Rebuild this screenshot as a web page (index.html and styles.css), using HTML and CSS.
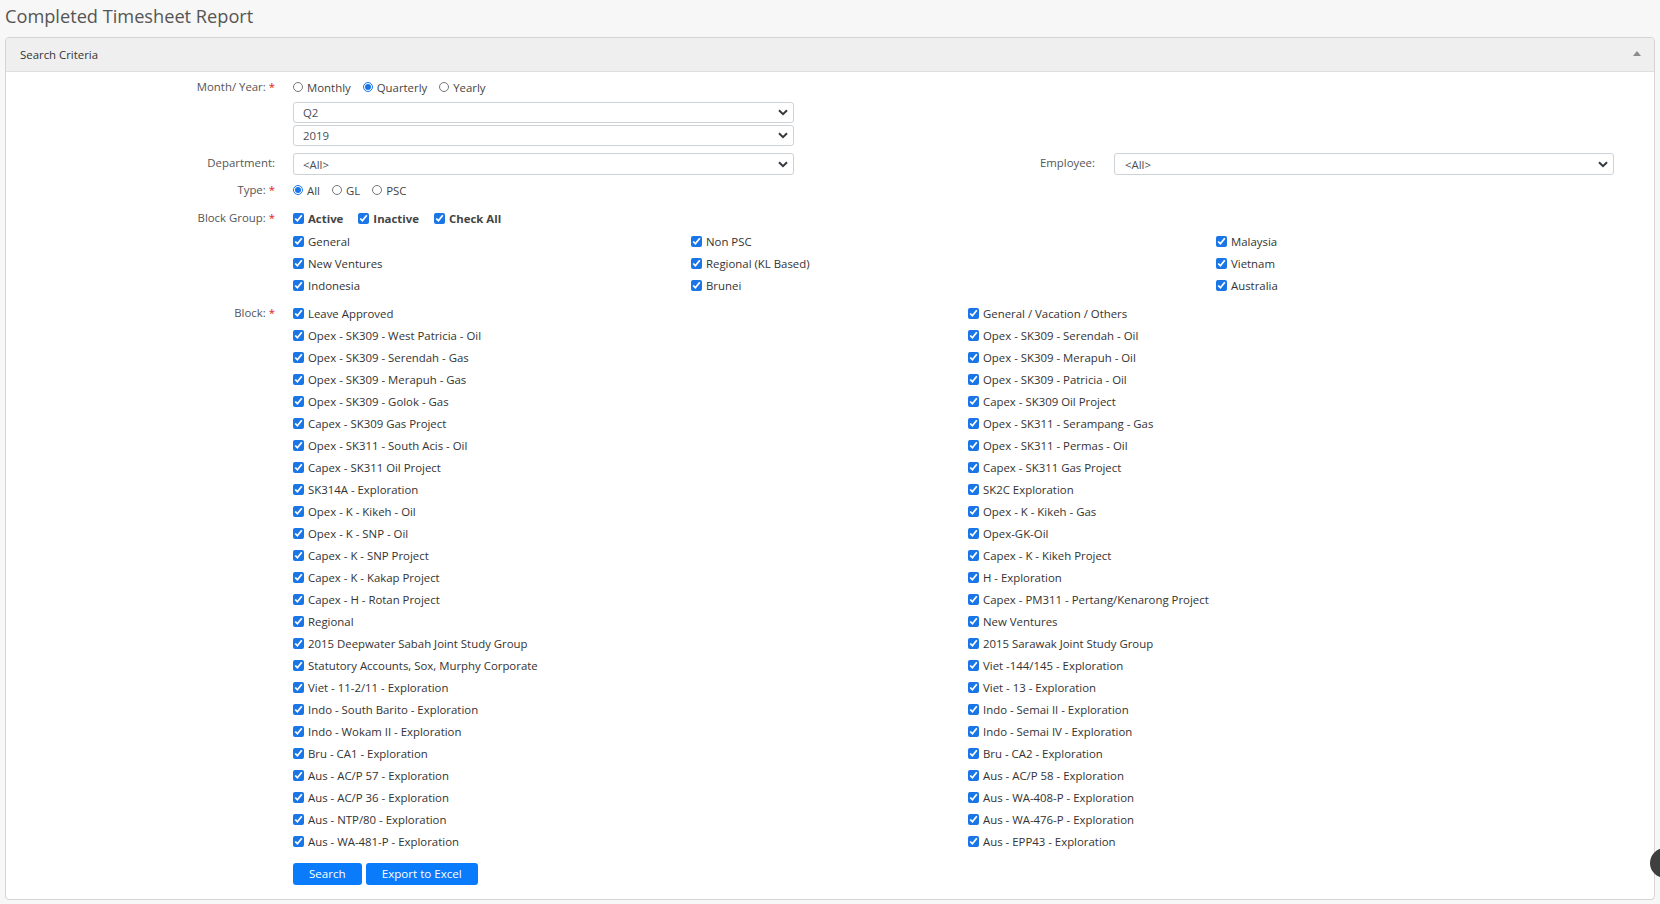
FILE: index.html
```html
<!DOCTYPE html>
<html lang="en">
<head>
<meta charset="utf-8">
<title>Completed Timesheet Report</title>
<link rel="stylesheet" href="styles.css">
</head>
<body>
<div class="page">
  <h1 class="page-title">Completed Timesheet Report</h1>
  <div class="panel">
    <div class="panel-heading">
      <span>Search Criteria</span>
      <span class="caret-up"></span>
    </div>
    <div class="panel-body">
      <div class="form-row">
        <div class="form-label">Month/ Year: <span class="req">*</span></div>
        <div class="control">
          <div class="line">
            <label class="opt"><input type="radio" name="period">Monthly</label>
            <label class="opt"><input type="radio" name="period" checked>Quarterly</label>
            <label class="opt"><input type="radio" name="period">Yearly</label>
          </div>
          <div class="select sel-top"><span>Q2</span><svg width="10" height="7" viewBox="0 0 10 7"><path d="M1 1.2 L5 5.2 L9 1.2" fill="none" stroke="#343a40" stroke-width="2"/></svg></div>
          <div class="select sel-next"><span>2019</span><svg width="10" height="7" viewBox="0 0 10 7"><path d="M1 1.2 L5 5.2 L9 1.2" fill="none" stroke="#343a40" stroke-width="2"/></svg></div>
        </div>
      </div>

      <div class="dept-row">
        <div class="form-label">Department:</div>
        <div class="select dept-select"><span>&lt;All&gt;</span><svg width="10" height="7" viewBox="0 0 10 7"><path d="M1 1.2 L5 5.2 L9 1.2" fill="none" stroke="#343a40" stroke-width="2"/></svg></div>
        <div class="form-label emp-label">Employee:</div>
        <div class="select emp-select"><span>&lt;All&gt;</span><svg width="10" height="7" viewBox="0 0 10 7"><path d="M1 1.2 L5 5.2 L9 1.2" fill="none" stroke="#343a40" stroke-width="2"/></svg></div>
      </div>

      <div class="form-row type-row">
        <div class="form-label">Type: <span class="req">*</span></div>
        <div class="line">
          <label class="opt"><input type="radio" name="type" checked>All</label>
          <label class="opt"><input type="radio" name="type">GL</label>
          <label class="opt"><input type="radio" name="type">PSC</label>
        </div>
      </div>

      <div class="form-row bg-row">
        <div class="form-label">Block Group: <span class="req">*</span></div>
        <div class="control">
          <div class="line bold">
            <label class="opt wide"><input type="checkbox" checked>Active</label>
            <label class="opt wide"><input type="checkbox" checked>Inactive</label>
            <label class="opt wide"><input type="checkbox" checked>Check All</label>
          </div>
          <div class="group-grid">
            <label class="item"><input type="checkbox" checked>General</label>
            <label class="item"><input type="checkbox" checked>Non PSC</label>
            <label class="item"><input type="checkbox" checked>Malaysia</label>
            <label class="item"><input type="checkbox" checked>New Ventures</label>
            <label class="item"><input type="checkbox" checked>Regional (KL Based)</label>
            <label class="item"><input type="checkbox" checked>Vietnam</label>
            <label class="item"><input type="checkbox" checked>Indonesia</label>
            <label class="item"><input type="checkbox" checked>Brunei</label>
            <label class="item"><input type="checkbox" checked>Australia</label>
          </div>
        </div>
      </div>

      <div class="form-row block-row">
        <div class="form-label">Block: <span class="req">*</span></div>
        <div class="control">
          <div class="block-grid">
            <label class="item"><input type="checkbox" checked>Leave Approved</label>
            <label class="item"><input type="checkbox" checked>General / Vacation / Others</label>
            <label class="item"><input type="checkbox" checked>Opex - SK309 - West Patricia - Oil</label>
            <label class="item"><input type="checkbox" checked>Opex - SK309 - Serendah - Oil</label>
            <label class="item"><input type="checkbox" checked>Opex - SK309 - Serendah - Gas</label>
            <label class="item"><input type="checkbox" checked>Opex - SK309 - Merapuh - Oil</label>
            <label class="item"><input type="checkbox" checked>Opex - SK309 - Merapuh - Gas</label>
            <label class="item"><input type="checkbox" checked>Opex - SK309 - Patricia - Oil</label>
            <label class="item"><input type="checkbox" checked>Opex - SK309 - Golok - Gas</label>
            <label class="item"><input type="checkbox" checked>Capex - SK309 Oil Project</label>
            <label class="item"><input type="checkbox" checked>Capex - SK309 Gas Project</label>
            <label class="item"><input type="checkbox" checked>Opex - SK311 - Serampang - Gas</label>
            <label class="item"><input type="checkbox" checked>Opex - SK311 - South Acis - Oil</label>
            <label class="item"><input type="checkbox" checked>Opex - SK311 - Permas - Oil</label>
            <label class="item"><input type="checkbox" checked>Capex - SK311 Oil Project</label>
            <label class="item"><input type="checkbox" checked>Capex - SK311 Gas Project</label>
            <label class="item"><input type="checkbox" checked>SK314A - Exploration</label>
            <label class="item"><input type="checkbox" checked>SK2C Exploration</label>
            <label class="item"><input type="checkbox" checked>Opex - K - Kikeh - Oil</label>
            <label class="item"><input type="checkbox" checked>Opex - K - Kikeh - Gas</label>
            <label class="item"><input type="checkbox" checked>Opex - K - SNP - Oil</label>
            <label class="item"><input type="checkbox" checked>Opex-GK-Oil</label>
            <label class="item"><input type="checkbox" checked>Capex - K - SNP Project</label>
            <label class="item"><input type="checkbox" checked>Capex - K - Kikeh Project</label>
            <label class="item"><input type="checkbox" checked>Capex - K - Kakap Project</label>
            <label class="item"><input type="checkbox" checked>H - Exploration</label>
            <label class="item"><input type="checkbox" checked>Capex - H - Rotan Project</label>
            <label class="item"><input type="checkbox" checked>Capex - PM311 - Pertang/Kenarong Project</label>
            <label class="item"><input type="checkbox" checked>Regional</label>
            <label class="item"><input type="checkbox" checked>New Ventures</label>
            <label class="item"><input type="checkbox" checked>2015 Deepwater Sabah Joint Study Group</label>
            <label class="item"><input type="checkbox" checked>2015 Sarawak Joint Study Group</label>
            <label class="item"><input type="checkbox" checked>Statutory Accounts, Sox, Murphy Corporate</label>
            <label class="item"><input type="checkbox" checked>Viet -144/145 - Exploration</label>
            <label class="item"><input type="checkbox" checked>Viet - 11-2/11 - Exploration</label>
            <label class="item"><input type="checkbox" checked>Viet - 13 - Exploration</label>
            <label class="item"><input type="checkbox" checked>Indo - South Barito - Exploration</label>
            <label class="item"><input type="checkbox" checked>Indo - Semai II - Exploration</label>
            <label class="item"><input type="checkbox" checked>Indo - Wokam II - Exploration</label>
            <label class="item"><input type="checkbox" checked>Indo - Semai IV - Exploration</label>
            <label class="item"><input type="checkbox" checked>Bru - CA1 - Exploration</label>
            <label class="item"><input type="checkbox" checked>Bru - CA2 - Exploration</label>
            <label class="item"><input type="checkbox" checked>Aus - AC/P 57 - Exploration</label>
            <label class="item"><input type="checkbox" checked>Aus - AC/P 58 - Exploration</label>
            <label class="item"><input type="checkbox" checked>Aus - AC/P 36 - Exploration</label>
            <label class="item"><input type="checkbox" checked>Aus - WA-408-P - Exploration</label>
            <label class="item"><input type="checkbox" checked>Aus - NTP/80 - Exploration</label>
            <label class="item"><input type="checkbox" checked>Aus - WA-476-P - Exploration</label>
            <label class="item"><input type="checkbox" checked>Aus - WA-481-P - Exploration</label>
            <label class="item"><input type="checkbox" checked>Aus - EPP43 - Exploration</label>
          </div>
          <div class="actions">
            <button class="btn" type="button">Search</button>
            <button class="btn" type="button">Export to Excel</button>
          </div>
        </div>
      </div>
    </div>
  </div>
</div>
<div class="float-dot"></div>
</body>
</html>
```
FILE: styles.css
```css
html, body {
  margin: 0;
  padding: 0;
}
body {
  background: #f7f7f7;
  font-family: "Open Sans", "Noto Sans", sans-serif;
  font-size: 11.4px;
  color: #333;
  overflow: hidden;
}
.page {
  padding: 4px 5px 0 5px;
}
.page-title {
  margin: 0;
  height: 33px;
  font-size: 18.2px;
  font-weight: 400;
  line-height: 24px;
  color: #555;
}
.panel {
  background: #fff;
  border: 1px solid #d4d4d4;
  border-radius: 4px;
}
.panel-heading {
  height: 33px;
  background: #efefef;
  border-bottom: 1px solid #dedede;
  border-radius: 4px 4px 0 0;
  padding: 0 13px 0 14px;
  display: flex;
  align-items: center;
  justify-content: space-between;
  color: #333;
}
.caret-up {
  width: 0;
  height: 0;
  border-left: 4px solid transparent;
  border-right: 4px solid transparent;
  border-bottom: 5px solid #8c8c8c;
  margin-top: -2px;
}
.panel-body {
  padding: 4px 0 14px 0;
}
.form-row {
  display: grid;
  grid-template-columns: 269px 1fr;
  column-gap: 18px;
}
.form-label {
  text-align: right;
  line-height: 22px;
  height: 22px;
  color: #555;
  white-space: nowrap;
}
.req {
  color: #e02020;
}
.line {
  display: flex;
  align-items: center;
  height: 22px;
}
.opt {
  display: flex;
  align-items: center;
  margin-right: 12px;
  color: #444;
}
.opt.wide {
  margin-right: 15px;
}
.bold {
  font-weight: 700;
  color: #333;
}
input[type="radio"],
input[type="checkbox"] {
  width: 10px;
  height: 10px;
  margin: 0 4px 0 0;
  accent-color: #1a76e6;
  flex: none;
}
input[type="checkbox"] {
  width: 11px;
  height: 11px;
  margin-right: 4px;
}
.select {
  box-sizing: border-box;
  display: flex;
  align-items: center;
  justify-content: space-between;
  height: 21px;
  border: 1px solid #cdd2d7;
  border-radius: 3px;
  background: #fff;
  padding: 0 5px 0 9px;
  color: #495057;
}
.sel-top {
  width: 501px;
  margin-top: 4px;
}
.sel-next {
  width: 501px;
  margin-top: 2px;
}
.dept-row {
  display: flex;
  align-items: flex-start;
  margin-top: 7px;
}
.dept-row .form-label {
  width: 269px;
  margin-right: 18px;
  line-height: 19px;
}
.dept-select {
  width: 501px;
  height: 22px;
}
.dept-row .emp-label {
  width: 301px;
  margin-right: 19px;
}
.emp-select {
  width: 500px;
  height: 22px;
  padding-left: 10px;
}
.type-row {
  margin-top: 4px;
}
.bg-row {
  margin-top: 6px;
}
.group-grid {
  display: grid;
  grid-template-columns: 398px 525px 1fr;
  grid-auto-rows: 22px;
  margin-top: 1px;
}
.item {
  display: flex;
  align-items: center;
  height: 22px;
  color: #333;
  white-space: nowrap;
}
.block-row {
  margin-top: 6px;
}
.block-grid {
  display: grid;
  grid-template-columns: 675px 1fr;
  grid-auto-rows: 22px;
}
.actions {
  display: flex;
  gap: 4px;
  margin-top: 11px;
}
.btn {
  height: 22px;
  padding: 0 16px;
  border: none;
  border-radius: 3px;
  background: #0a7bfa;
  color: #fff;
  font-family: inherit;
  font-size: 11.6px;
  line-height: 22px;
  cursor: pointer;
}
.float-dot {
  position: fixed;
  top: 848px;
  right: -20px;
  width: 30px;
  height: 30px;
  border-radius: 50%;
  background: #3f3f3f;
}
```
